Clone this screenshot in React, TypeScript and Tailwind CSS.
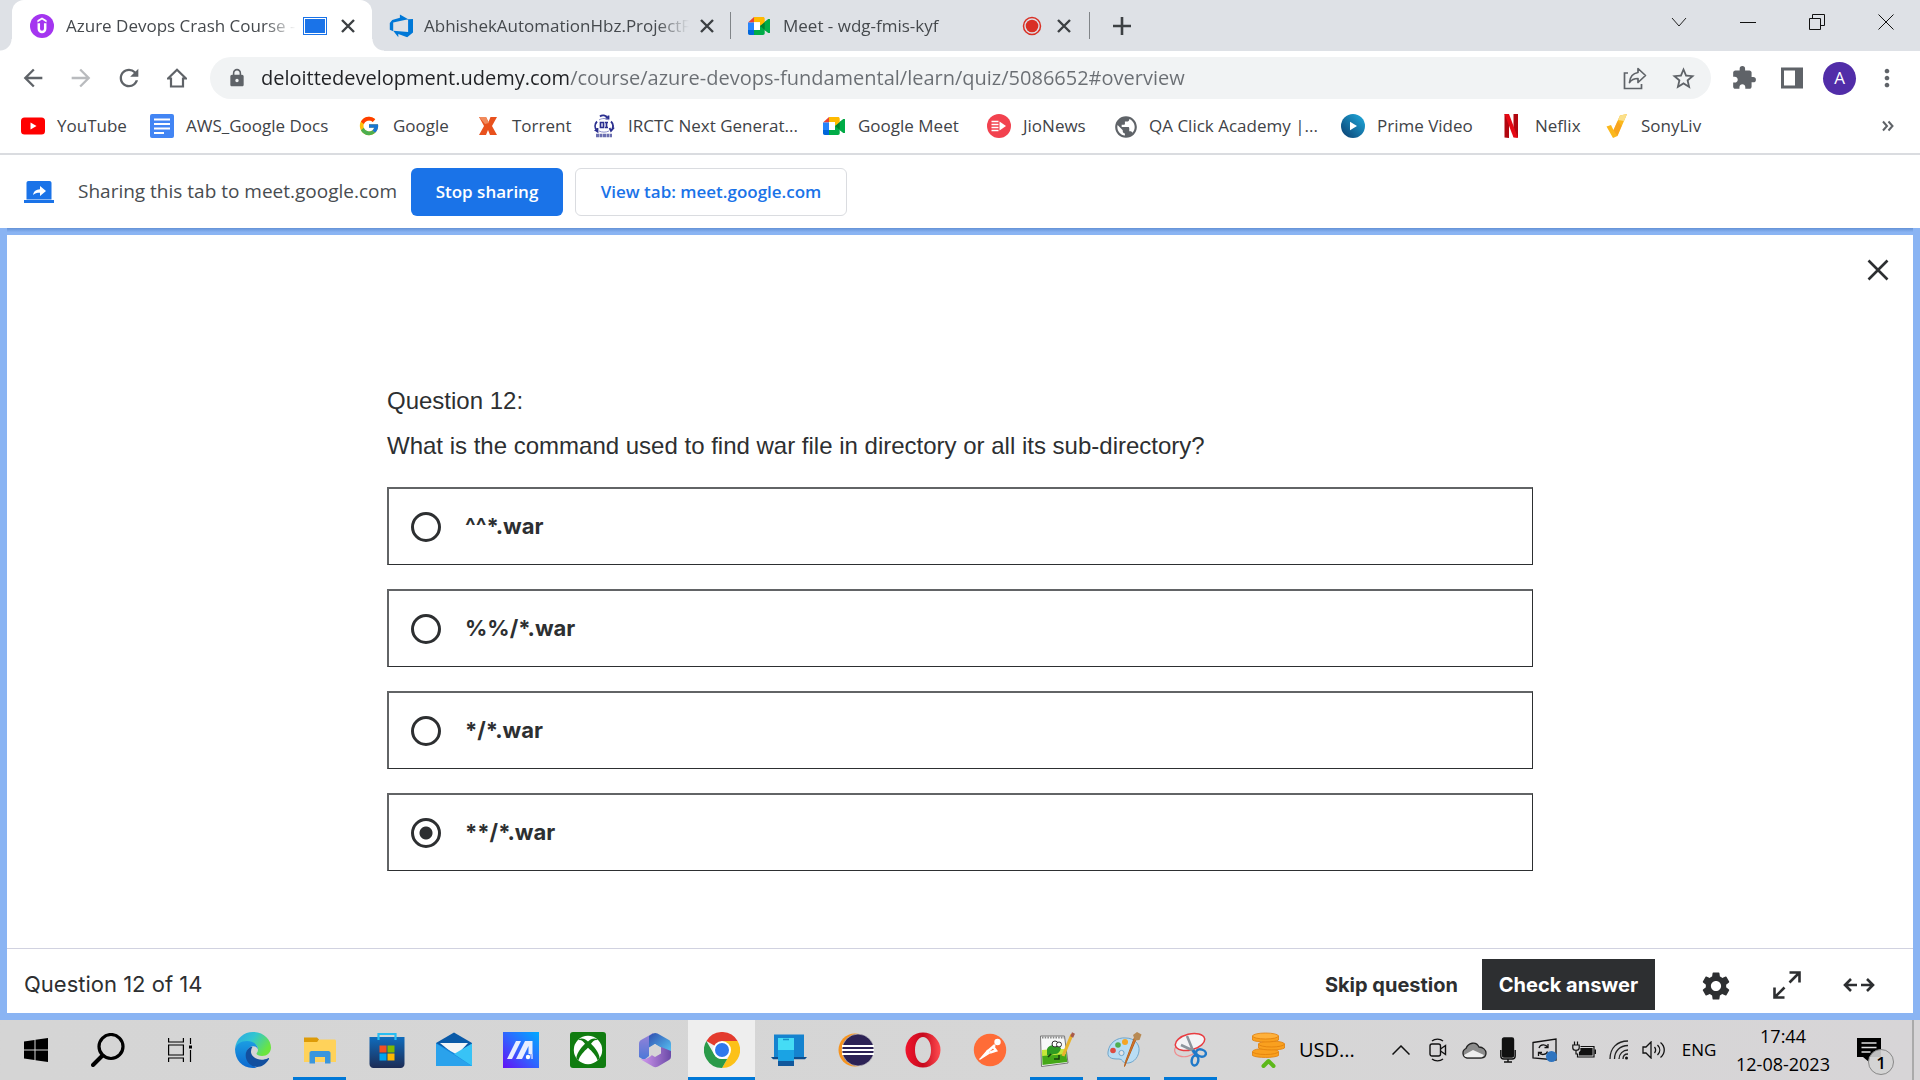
import { useState, type ReactNode } from "react";
import {
  MdArrowBack,
  MdArrowForward,
  MdExtension,
  MdLock,
  MdMoreVert,
  MdPublic,
  MdRefresh,
  MdSettings,
  MdStarBorder,
} from "react-icons/md";
import { FcGoogle } from "react-icons/fc";

/* ---------- favicons ---------- */

function UdemyIcon() {
  return (
    <svg viewBox="0 0 24 24" className="size-6 shrink-0">
      <circle cx="12" cy="12" r="12" fill="#a435f0" />
      <path d="M7.400 8.400 12 5.400l4.600 3V6.300L12 3.400 7.400 6.300z" fill="#fff" />
      <path d="M8.800 9.200v5.600a3.200 3.200 0 0 0 6.400 0V9.200" fill="none" stroke="#fff" strokeWidth="2.500" />
    </svg>
  );
}

function AzureIcon() {
  return (
    <svg viewBox="0 0 24 24" className="size-6 shrink-0">
      <path
        d="M24 4.900v13.600L18.200 23.200l-8.900-3.200v3.200L4.200 16.700l14.900 1.200V5.200zM19.200 5.200 10.900.5v3.300L3.200 6 .8 9v6.800l3.400 1.400V8.600z"
        fill="#0078d7"
      />
    </svg>
  );
}

function MeetIcon() {
  return (
    <svg viewBox="0 0 24 24" className="size-6 shrink-0">
      <path d="M7 3h9c1 0 1.700.7 1.700 1.700V9L13 12V8H7z" fill="#ffba00" />
      <path d="M1 8.500 7 3v5.500z" fill="#ea4335" />
      <path d="M1 8.500h6v8H1z" fill="#2684fc" />
      <path d="M1 16h6v5H2.700C1.700 21 1 20.300 1 19.300z" fill="#0066da" />
      <path d="M7 16h6v-4l4.700-3v10.300c0 1-.7 1.700-1.700 1.700H7z" fill="#00ac47" />
      <path d="M13 12l8.200-6.800c.7-.5 1.800-.1 1.800.8v12c0 .9-1.100 1.300-1.800.8z" fill="#00832d" />
      <path d="M17.700 8.100l3.500-2.900c.7-.5 1.800-.1 1.800.8v12c0 .9-1.100 1.300-1.800.8l-3.500-2.900z" fill="#00ac47" />
      <path d="M7 8.300h6v7.700H7z" fill="#fff" />
    </svg>
  );
}

function YouTubeIcon() {
  return (
    <svg viewBox="0 0 24 24" className="size-6">
      <rect y="3.500" width="24" height="17" rx="3.500" fill="#f00" />
      <path d="M9.500 8.500v7l6-3.500z" fill="#fff" />
    </svg>
  );
}

function DocsIcon() {
  return (
    <svg viewBox="0 0 24 24" className="size-6">
      <rect width="24" height="24" rx="2" fill="#4285f4" />
      <path d="M4 5.500h16M4 10h16M4 14.500h16M4 19h10" stroke="#fff" strokeWidth="2.200" />
    </svg>
  );
}

function TorrentIcon() {
  return (
    <svg viewBox="0 0 24 24" className="size-6">
      <path d="M3 3h7l2.500 5L14.500 3H21l-5 9 5 9h-7l-2-5-2 5H3l5-9z" fill="#e8511d" />
      <path d="M3 3h7l3 6-4 1z" fill="#f08a5c" />
    </svg>
  );
}

function IrctcIcon() {
  return (
    <svg viewBox="0 0 24 24" className="size-6" fill="none" stroke="#2b2f8f">
      <path d="M8 2.500c2-2 6-1.500 7.500 1.500M16.500 1.500v3h-3" strokeWidth="1.800" />
      <path d="M5 7.500c-2.500 2.500-2.500 6.500 0 9.500M2.500 15.500l3 2v-3.500M19 7.500c2.500 2.500 2.500 6 .5 9M22 13.500l-3 3.500-1.500-3" strokeWidth="1.800" />
      <path d="M7 6c3-2 7-2 10 0M7 17c3 1.500 7 1.500 10 0" stroke="#8d90cc" />
      <path d="M8.500 8.500h3v5h-3zM13 8.500h3M14.500 8.500v5M13 13.500h3" strokeWidth="1.700" />
      <path d="M4 21.500h16" strokeWidth="3.500" strokeDasharray="3 .5" stroke="#6b6fb0" />
    </svg>
  );
}

function JioIcon() {
  return (
    <svg viewBox="0 0 24 24" className="size-6">
      <circle cx="12" cy="12" r="12" fill="#f2424f" />
      <path d="M4.500 7.500h7M4.500 10.500h7M4.500 13.500h7M4.500 16.500h7" stroke="#fff" strokeWidth="1.700" />
      <path d="M12.500 7.500v9l6.500-4.500z" fill="#fff" />
    </svg>
  );
}

function PrimeIcon() {
  return (
    <svg viewBox="0 0 24 24" className="size-6">
      <defs>
        <linearGradient id="prime" x1="0" y1="1" x2="1" y2="0">
          <stop offset="0" stopColor="#0b3c6e" />
          <stop offset="1" stopColor="#20aee0" />
        </linearGradient>
      </defs>
      <circle cx="12" cy="12" r="12" fill="url(#prime)" />
      <path d="M9 7.800v8.400l7-4.200z" fill="#fff" />
    </svg>
  );
}

function NetflixIcon() {
  return (
    <svg viewBox="0 0 24 24" className="size-6">
      <path d="M5.500 0H10v24l-4.500-.5zM14.500 0H19v23.500l-4.500-1z" fill="#b1060f" />
      <path d="M5.500 0H10l9 24-4.500-.5z" fill="#e50914" />
    </svg>
  );
}

function SonyIcon() {
  return (
    <svg viewBox="0 0 24 24" className="size-6">
      <path d="M1.500 12.500 6 11l2.500 5L15 1.500 22 0 12.500 22 8 24z" fill="#fbb81c" />
      <path d="M15 1.500 22 0l-3 7-6-1z" fill="#fbe08a" />
      <path d="M8.500 16 12.500 7l4 5-4 10z" fill="#f5901e" opacity=".5" />
    </svg>
  );
}

/* ---------- browser chrome ---------- */

function CloseTab({ label }: { label: string }) {
  return (
    <button aria-label={label} className="grid size-6 shrink-0 place-items-center text-[#3c4043]">
      <svg viewBox="0 0 14 14" className="size-[14px]">
        <path d="M1 1l12 12M13 1L1 13" stroke="currentColor" strokeWidth="2.400" />
      </svg>
    </button>
  );
}

function TabTitle({ children }: { children: ReactNode }) {
  return (
    <span className="min-w-0 flex-1 overflow-hidden whitespace-nowrap text-[17px] text-[#45494d] [mask-image:linear-gradient(to_right,black_calc(100%-32px),transparent)]">
      {children}
    </span>
  );
}

function TabStrip() {
  return (
    <div className="flex h-[51px] items-stretch bg-[#dee1e6] pl-3">
      <div className="relative flex w-[360px] items-center rounded-t-xl bg-white pr-3 pl-[18px] before:absolute before:bottom-0 before:-left-3 before:size-3 before:bg-[radial-gradient(circle_at_0_0,transparent_11px,white_12px)] after:absolute after:-right-3 after:bottom-0 after:size-3 after:bg-[radial-gradient(circle_at_100%_0,transparent_11px,white_12px)]">
        <UdemyIcon />
        <div className="ml-3 flex min-w-0 flex-1">
          <TabTitle>Azure Devops Crash Course -</TabTitle>
        </div>
        <svg viewBox="0 0 24 18" className="mr-[9px] ml-[7px] h-[18px] w-6 shrink-0">
          <rect width="24" height="18" fill="#1a73e8" />
          <rect x="1.500" y="1.500" width="21" height="15" fill="none" stroke="#fff" />
        </svg>
        <CloseTab label="Close Azure Devops Crash Course tab" />
      </div>
      <div className="flex w-[358px] items-center pr-[11px] pl-[17px]">
        <AzureIcon />
        <div className="mr-[6px] ml-[11px] flex min-w-0 flex-1">
          <TabTitle>AbhishekAutomationHbz.ProjectF</TabTitle>
        </div>
        <CloseTab label="Close project tab" />
      </div>
      <div className="my-3 w-px bg-[#808488]" />
      <div className="flex w-[358px] items-center pr-[13px] pl-4">
        <MeetIcon />
        <div className="ml-3 flex min-w-0 flex-1">
          <TabTitle>Meet - wdg-fmis-kyf</TabTitle>
        </div>
        <svg viewBox="0 0 20 20" className="mr-[10px] size-5 shrink-0">
          <circle cx="10" cy="10" r="8.500" fill="none" stroke="#d93025" strokeWidth="1.500" />
          <circle cx="10" cy="10" r="6.300" fill="#d93025" />
        </svg>
        <CloseTab label="Close Meet tab" />
      </div>
      <div className="my-3 w-px bg-[#808488]" />
      <button aria-label="New tab" className="ml-4 grid w-8 place-items-center text-[#3c4043]">
        <svg viewBox="0 0 18 18" className="size-[18px]">
          <path d="M9 0v18M0 9h18" stroke="currentColor" strokeWidth="2.600" />
        </svg>
      </button>
      <div className="ml-auto flex h-11">
        <button aria-label="Search tabs" className="grid w-[69px] place-items-center">
          <svg viewBox="0 0 16 16" className="size-4">
            <path d="M1 4l7 8 7-8" fill="none" stroke="#222" />
          </svg>
        </button>
        <button aria-label="Minimize" className="grid w-[69px] place-items-center">
          <svg viewBox="0 0 16 16" className="size-4">
            <path d="M0 8.500h16" stroke="#111" />
          </svg>
        </button>
        <button aria-label="Restore" className="grid w-[69px] place-items-center">
          <svg viewBox="0 0 16 16" className="size-4" fill="none" stroke="#111">
            <path d="M.5 4.500h11v11H.5zM3.500 4.500v-4h12v11h-4" />
          </svg>
        </button>
        <button aria-label="Close window" className="grid w-[69px] place-items-center">
          <svg viewBox="0 0 16 16" className="size-4">
            <path d="M.5.5l15 15M15.500.5l-15 15" stroke="#111" />
          </svg>
        </button>
      </div>
    </div>
  );
}

function Toolbar() {
  return (
    <div className="flex items-center pt-[6px] pr-[18px] pl-[18px] text-[#5f6368]">
      <div className="flex gap-[18px]">
        <button aria-label="Back" className="grid size-[30px] place-items-center"><MdArrowBack size={28} /></button>
        <button aria-label="Forward" className="grid size-[30px] place-items-center text-[#b9bbbe]"><MdArrowForward size={28} /></button>
        <button aria-label="Reload" className="grid size-[30px] place-items-center"><MdRefresh size={28} /></button>
        <button aria-label="Home" className="grid size-[30px] place-items-center">
          <svg viewBox="0 0 20 20" className="size-5">
            <path d="M1 10.500L10 1.800l9 8.700h-3V18.500H4v-8z" fill="none" stroke="currentColor" strokeWidth="2.200" />
          </svg>
        </button>
      </div>
      <div className="ml-[18px] flex h-[42px] flex-1 items-center rounded-full bg-[#f1f3f4] pr-3 pl-[17px]">
        <MdLock size={20} className="shrink-0" />
        <input
          aria-label="Address"
          defaultValue="deloittedevelopment.udemy.com/course/azure-devops-fundamental/learn/quiz/5086652#overview"
          className="ml-[14px] min-w-0 flex-1 bg-[linear-gradient(to_right,#202124_308px,#6a6e73_308px)] bg-clip-text text-[20px] text-[#5f6368] outline-none [-webkit-text-fill-color:transparent]"
        />
        <button aria-label="Share" className="grid size-8 place-items-center">
          <svg viewBox="0 0 24 24" className="size-6" fill="none" stroke="currentColor" strokeWidth="1.700">
            <path d="M5 7H1.500v15.500h17V18" />
            <path d="M15 2.500l7.500 7-7.500 7v-4c-4 0-6.500 1-8.500 4 .5-5.500 3-9.200 8.500-10z" strokeLinejoin="round" />
          </svg>
        </button>
        <button aria-label="Bookmark this tab" className="ml-4 grid size-8 place-items-center"><MdStarBorder size={27} /></button>
      </div>
      <div className="ml-[18px] flex items-center">
        <button aria-label="Extensions" className="grid size-[30px] place-items-center"><MdExtension size={26} /></button>
        <button aria-label="Side panel" className="ml-[18px] grid size-[30px] place-items-center">
          <svg viewBox="0 0 22 22" className="size-[22px]">
            <path d="M0 .5h22v21H0zM3 3.500v15h11v-15z" fill="currentColor" fillRule="evenodd" />
          </svg>
        </button>
        <button aria-label="Profile" className="ml-4 grid size-[33px] place-items-center rounded-full bg-[#512da8] text-[17px] text-white">A</button>
        <button aria-label="Menu" className="ml-4 grid size-[30px] place-items-center"><MdMoreVert size={28} /></button>
      </div>
    </div>
  );
}

const bookmarks: { label: string; icon: ReactNode; width: string }[] = [
  { label: "YouTube", icon: <YouTubeIcon />, width: "w-[129px]" },
  { label: "AWS_Google Docs", icon: <DocsIcon />, width: "w-[207px]" },
  { label: "Google", icon: <FcGoogle size={22} />, width: "w-[119px]" },
  { label: "Torrent", icon: <TorrentIcon />, width: "w-[116px]" },
  { label: "IRCTC Next Generat...", icon: <IrctcIcon />, width: "w-[230px]" },
  { label: "Google Meet", icon: <MeetIcon />, width: "w-[165px]" },
  { label: "JioNews", icon: <JioIcon />, width: "w-[126px]" },
  { label: "QA Click Academy |...", icon: <MdPublic size={26} color="#5f6368" />, width: "w-[228px]" },
  { label: "Prime Video", icon: <PrimeIcon />, width: "w-[158px]" },
  { label: "Neflix", icon: <NetflixIcon />, width: "w-[106px]" },
  { label: "SonyLiv", icon: <SonyIcon />, width: "w-[110px]" },
];

function Bookmarks() {
  return (
    <nav aria-label="Bookmarks" className="flex h-14 items-center border-b-2 border-[#dadce0] pr-[26px] pl-[21px]">
      {bookmarks.map((b) => (
        <a key={b.label} href="#" className={`flex shrink-0 items-center gap-3 whitespace-nowrap text-[17px] text-[#3f4347] ${b.width}`}>
          <span className="grid size-6 shrink-0 place-items-center">{b.icon}</span>
          {b.label}
        </a>
      ))}
      <button aria-label="More bookmarks" className="ml-auto">
        <svg viewBox="0 0 12 12" className="size-3" fill="none" stroke="#5f6368" strokeWidth="2">
          <path d="M1 1.500L5 6l-4 4.500M6.500 1.500l4 4.500-4 4.500" />
        </svg>
      </button>
    </nav>
  );
}

function ShareBar() {
  return (
    <div className="flex h-[73px] items-center pl-6">
      <svg viewBox="0 0 30 22" className="h-[22px] w-[30px]">
        <path d="M4.500 0h21c1.200 0 2 .8 2 2v16.500h-25V2c0-1.200.8-2 2-2zM0 19h30v3H0z" fill="#1a73e8" />
        <path d="M9 14c.8-4 3-5.500 7-5.800V5l6 5-6 5v-3.200c-3.200 0-5.300.5-7 2.200z" fill="#fff" />
      </svg>
      <span className="ml-6 w-[333px] text-[19px] whitespace-nowrap text-[#484c50]">Sharing this tab to meet.google.com</span>
      <button className="h-12 w-[152px] rounded-md bg-[#1a73e8] text-[17px] font-semibold text-white">Stop sharing</button>
      <button className="ml-3 h-12 w-[272px] rounded-md border border-[#dadce0] text-[17px] font-semibold text-[#1a73e8]">
        View tab: meet.google.com
      </button>
    </div>
  );
}

/* ---------- quiz ---------- */

const options = ["^^*.war", "%%/*.war", "*/*.war", "**/*.war"];

function Quiz() {
  const [picked, setPicked] = useState(3);
  return (
    <main className="flex flex-1 flex-col border-7 border-t-0 border-[#8ab4f3] font-[Inter,sans-serif] text-[#2d2f31]">
      <div className="h-[7px] bg-linear-to-b from-[#6492d6] to-[#8ab4f3] to-60%" />
      <div className="flex justify-end px-[19px] pt-[19px]">
        <button aria-label="Close quiz" className="grid size-8 place-items-center">
          <svg viewBox="0 0 22 22" className="size-[22px]">
            <path d="M1.500 1.500l19 19M20.500 1.500l-19 19" stroke="currentColor" strokeWidth="2.600" />
          </svg>
        </button>
      </div>
      <form className="mx-auto mt-[97px] mb-auto w-full max-w-[1146px]">
        <div className="font-['Liberation_Sans',sans-serif] text-[24px] leading-9">
          <p>Question 12:</p>
          <p className="mt-[9px]">What is the command used to find war file in directory or all its sub-directory?</p>
        </div>
        <div className="mt-[23px] flex flex-col gap-6">
          {options.map((o, i) => (
            <label
              key={o}
              className="flex h-[78px] items-center gap-6 border-2 border-r border-b border-[#626466] border-r-[#2d2f31] border-b-[#2d2f31] pl-[22px] text-[22px] font-bold"
            >
              <input
                type="radio"
                name="answer"
                checked={picked === i}
                onChange={() => setPicked(i)}
                className="size-[30px] appearance-none rounded-full border-[3px] border-[#2d2f31] checked:bg-[radial-gradient(circle,#2d2f31_6px,transparent_7px)]"
              />
              {o}
            </label>
          ))}
        </div>
      </form>
      <footer className="flex h-[65px] items-center border-t border-[#d1d2e0] pt-[7px] pr-[38px] pl-[17px]">
        <span className="text-[22px]">Question 12 of 14</span>
        <button className="ml-auto px-6 text-[20px] font-bold">Skip question</button>
        <button className="h-[51px] w-[173px] bg-[#2d2f31] text-[20px] font-bold text-white">Check answer</button>
        <button aria-label="Settings" className="ml-11 grid size-8 place-items-center"><MdSettings size={34} className="shrink-0" /></button>
        <button aria-label="Expand" className="ml-10 grid size-8 place-items-center">
          <svg viewBox="0 0 28 28" className="size-7" fill="none" stroke="currentColor" strokeWidth="2.600">
            <path d="M16.500 1.500h10v10M26 2L16.500 11.500M11.500 26.500h-10v-10M2 26l9.500-9.500" />
          </svg>
        </button>
        <button aria-label="Wide view" className="ml-10 grid size-8 place-items-center">
          <svg viewBox="0 0 32 14" className="h-[14px] w-8" fill="none" stroke="currentColor" strokeWidth="2.600">
            <path d="M8 1L2 7l6 6M2 7h12M24 1l6 6-6 6M30 7H18" />
          </svg>
        </button>
      </footer>
    </main>
  );
}

/* ---------- taskbar ---------- */

function EdgeIcon() {
  return (
    <svg viewBox="0 0 36 36" className="size-9">
      <defs>
        <linearGradient id="edgeTop" x1="0" y1="0" x2="1" y2=".5">
          <stop offset="0" stopColor="#2aa6e6" />
          <stop offset=".5" stopColor="#32c6d0" />
          <stop offset="1" stopColor="#6be53f" />
        </linearGradient>
        <linearGradient id="edgeLeft" x1="0" y1="0" x2="0" y2="1">
          <stop offset="0" stopColor="#1b9de2" />
          <stop offset="1" stopColor="#0c68cf" />
        </linearGradient>
      </defs>
      <path d="M0 17C1 6 9 0 18 0c11 0 18 8 18 15.500 0 5-4 8.500-9 8.500-3 0-5.500-1-5.500-2.200 0-1 1.500-1.500 1.500-4.300C23 13 18 10 12 10 6 10 1 13 0 17z" fill="url(#edgeTop)" />
      <path d="M0 17c1-5 6-8 12-8 6.500 0 11 4 11 8.500-1-3-4-4-6.500-3-4 1.500-6.500 6.500-4 12 2 4.500 6.500 8 9.500 9C9 38 0 29 0 17z" fill="url(#edgeLeft)" />
      <path d="M14 16c-5 4-4 12 .5 16 5 4.500 14 4.500 19.500-5 .3-.8-.3-1.200-1-.8-5 2.500-12 2-15.500-2.500-2-2.500-2-6 0-9-1.300 0-2.500.4-3.500 1.300z" fill="#124f9f" />
    </svg>
  );
}

function ExplorerIcon() {
  return (
    <svg viewBox="0 0 34 34" className="size-[34px]">
      <path d="M1 4.500h13l2 2-2 4H1z" fill="#dd9b08" />
      <path d="M1 9h13l2.500-2.500H31.500c.8 0 1.500.7 1.500 1.500v21H1z" fill="#ffd25a" />
      <path d="M6.500 30.500V20c0-1 .8-2 2-2h17c1.200 0 2 1 2 2v10.500h-5.500V24h-10v6.500z" fill="#3a96dd" />
    </svg>
  );
}

function StoreIcon() {
  return (
    <svg viewBox="0 0 36 36" className="size-9">
      <defs>
        <linearGradient id="store" x1="0" y1="0" x2="0" y2="1">
          <stop offset="0" stopColor="#0f6cbd" />
          <stop offset="1" stopColor="#1d2c55" />
        </linearGradient>
      </defs>
      <path d="M.5 5h35v27c0 2-1.500 4-4 4h-27c-2.500 0-4-2-4-4z" fill="url(#store)" />
      <path d="M9.500 8V2h17v6" fill="none" stroke="#28bdf2" strokeWidth="2.200" />
      <path d="M10.500 13.500h7v7h-7z" fill="#f25022" />
      <path d="M18.500 13.500h7v7h-7z" fill="#7fba00" />
      <path d="M10.500 21.500h7v7h-7z" fill="#00a4ef" />
      <path d="M18.500 21.500h7v7h-7z" fill="#ffb900" />
    </svg>
  );
}

function MailIcon() {
  return (
    <svg viewBox="0 0 36 36" className="size-9">
      <path d="M0 11L18 .5 36 11v8H0z" fill="#0a5aa8" />
      <path d="M4 11h28L20 24z" fill="#f3f5f7" />
      <path d="M0 11l36 20v3H0z" fill="#1487dc" />
      <path d="M0 11.500L36 34H0z" fill="#2aa2ec" />
      <path d="M36 11.500v22.500L18 22z" fill="#38c3f6" />
    </svg>
  );
}

function MyAsusIcon() {
  return (
    <svg viewBox="0 0 36 36" className="size-9">
      <defs>
        <linearGradient id="asus" x1="0" y1="1" x2="1" y2="0">
          <stop offset="0" stopColor="#6410f5" />
          <stop offset=".5" stopColor="#3066ff" />
          <stop offset="1" stopColor="#00aaff" />
        </linearGradient>
      </defs>
      <path d="M0 0h36v36H0z" fill="url(#asus)" />
      <path d="M4 27L13 9h5L9 27zM13 27l9-18h7.500v13h-4v-8L19 27z" fill="#e8eeff" />
      <circle cx="25" cy="25" r="2.200" fill="#fff" />
      <path d="M27 22h3v5h-2z" fill="#a9bcff" />
    </svg>
  );
}

function XboxIcon() {
  return (
    <svg viewBox="0 0 36 36" className="size-9">
      <rect width="36" height="36" rx="3" fill="#107c10" />
      <circle cx="18" cy="18" r="14.200" fill="#fff" />
      <path d="M8.500 7.500C12 5.500 15 7 18 9.500 21 7 24 5.500 27.500 7.500L27 8.300C25 7.500 23 9.500 21 11.800c4.500 4.500 9 10.500 8.500 15l-2 1.500c-1-4-5.500-9-9.500-12.500C14 19.300 9.500 24.300 8.500 28.300l-2-1.500c-.5-4.500 4-10.500 8.500-15C13 9.500 11 7.500 9 8.300z" fill="#107c10" />
    </svg>
  );
}

function M365Icon() {
  return (
    <svg viewBox="0 0 36 36" className="size-9">
      <defs>
        <linearGradient id="m1" x1="0" y1="0" x2="0" y2="1"><stop offset="0" stopColor="#9a82d8" /><stop offset="1" stopColor="#4a78d8" /></linearGradient>
        <linearGradient id="m2" x1="0" y1="0" x2="1" y2="1"><stop offset="0" stopColor="#2f4fb0" /><stop offset="1" stopColor="#58c6f4" /></linearGradient>
        <linearGradient id="m3" x1="0" y1="0" x2="1" y2="0"><stop offset="0" stopColor="#d59cf0" /><stop offset="1" stopColor="#6b4aa8" /></linearGradient>
      </defs>
      <path d="M12 3.500L16 1v12l-4 3v8l-5 4-5-3V12c0-2 .5-3 2-4z" fill="url(#m1)" />
      <path d="M12 4l4-2.500c1.500-.8 3-.8 4.500 0L32 8c1.500 1 2 2 2 4v9l-10-5-6-4-6 4z" fill="url(#m2)" />
      <path d="M34 19v5c0 2-.5 3-2 4l-11 6.500c-2 1-3.500 1-5 0L3 27c5 1 9-1 12-4h6l3-3v-5z" fill="url(#m3)" />
      <path d="M18 12l6 3.500v6L18 25l-6-3.500v-6z" fill="#d6d6d6" />
    </svg>
  );
}

function ChromeIcon() {
  return (
    <svg viewBox="0 0 36 36" className="size-9">
      <path d="M18 18L2.400 9A18 18 0 0 1 33.600 9z" fill="#e33b2e" />
      <path d="M18 9h15.600A18 18 0 0 1 18 36l7.800-13.500z" fill="#fcc118" />
      <path d="M2.400 9l7.800 13.500A9 9 0 0 0 18 27h5.200L18 36A18 18 0 0 1 2.400 9z" fill="#2a9a49" />
      <circle cx="18" cy="18" r="9" fill="#fff" />
      <circle cx="18" cy="18" r="7" fill="#2f78ec" />
    </svg>
  );
}

function PhoneLinkIcon() {
  return (
    <svg viewBox="0 0 36 36" className="size-9">
      <path d="M3 2.500h30v23H3z" fill="#1583cf" />
      <path d="M0 25h36l-2 2.200H2z" fill="#0d4d8c" />
      <path d="M7 6h16v28H7z" fill="#1aa3e4" />
      <path d="M7 6h16v12H7z" fill="#45dcf5" />
      <path d="M7 29h16v5H7z" fill="#11589c" />
      <path d="M12 7.500h6" stroke="#1593c9" strokeWidth="1.500" />
    </svg>
  );
}

function EclipseIcon() {
  return (
    <svg viewBox="0 0 36 36" className="size-9">
      <circle cx="17" cy="18" r="16.500" fill="#f7941e" />
      <circle cx="20" cy="18" r="16" fill="#2c2255" stroke="#d6d6d6" strokeWidth=".6" />
      <path d="M4 14h32M4 18h32M4 22h32" stroke="#fff" strokeWidth="2.200" />
    </svg>
  );
}

function OperaIcon() {
  return (
    <svg viewBox="0 0 36 36" className="size-9">
      <defs>
        <linearGradient id="opera" x1="0" y1="0" x2="1" y2="0">
          <stop offset="0" stopColor="#f0142c" />
          <stop offset=".5" stopColor="#c60a1e" />
          <stop offset="1" stopColor="#ff4c50" />
        </linearGradient>
      </defs>
      <path d="M18 .5a17.500 17.500 0 1 0 0 35 17.500 17.500 0 0 0 0-35zM18 5c4.500 0 8 5.500 8 13s-3.500 13-8 13-8-5.500-8-13 3.500-13 8-13z" fill="url(#opera)" fillRule="evenodd" />
    </svg>
  );
}

function PostmanIcon() {
  return (
    <svg viewBox="0 0 36 36" className="size-9">
      <circle cx="18" cy="18" r="16.200" fill="#ff6c37" />
      <circle cx="25.500" cy="10" r="3.200" fill="#fff" />
      <path d="M23 13l-8 7M21 14.500l3 4-6 2" stroke="#fff" strokeWidth="2.500" fill="none" />
      <path d="M15.500 18.500L9 26l-1.500 1.500 10-6.500z" fill="#fff" stroke="#fff" strokeWidth="1.200" />
    </svg>
  );
}

function NotepadIcon() {
  return (
    <svg viewBox="0 0 36 36" className="size-9">
      <path d="M1.500 4h24l3.500 27-26.500 3.500z" fill="#f7f8f8" stroke="#777" />
      <path d="M3 5.500h23" stroke="#888" strokeWidth="2" strokeDasharray="1.500 1.200" />
      <path d="M3 20c8-3 16-2 24-3l1.200 13L3.500 33z" fill="#45a818" />
      <path d="M3 18c8-1 15-1 23.500-1l.5 5-23.800 2z" fill="#c7e83a" />
      <path d="M8 17c2-5 11-5 14-1-1 4-3 6-6 6s-5 3-8 1z" fill="#2f9b22" />
      <circle cx="16" cy="12" r="3" fill="#fff" stroke="#333" />
      <circle cx="20" cy="12.500" r="2.500" fill="#fff" stroke="#333" />
      <path d="M15 27h5v-4M12 22l-3 3" stroke="#183e10" strokeWidth="1.500" fill="none" />
      <path d="M33 2.500L24 24" stroke="#e9b32c" strokeWidth="3.200" />
      <path d="M34.500 1l-1.800 4" stroke="#a85a4a" strokeWidth="3.200" />
    </svg>
  );
}

function PaintIcon() {
  return (
    <svg viewBox="0 0 36 36" className="size-9">
      <path d="M2 20C3 11 11 5 20 6c8 0 14 6 13 13-1 8-7 13-14 12-3-1-2-4-6-4-5 0-12 0-11-7z" fill="#b9ddf4" stroke="#6fa6cc" />
      <circle cx="7" cy="18.500" r="2.800" fill="#dd4b42" />
      <circle cx="12" cy="13" r="2.800" fill="#4fae50" />
      <circle cx="19" cy="10" r="3" fill="#f4a526" />
      <circle cx="15.500" cy="21" r="2.600" fill="#e4e4e6" stroke="#6fa6cc" />
      <path d="M31 5L20 31l-1.500 3.500 1-5L29 4z" fill="#d8762c" stroke="#b6601c" />
      <path d="M27 3l4-3 4.500 2.500L33.500 8 29 8.500z" fill="#b88a54" />
    </svg>
  );
}

function SnipIcon() {
  return (
    <svg viewBox="0 0 36 36" className="size-9" fill="none">
      <ellipse cx="13" cy="17" rx="11.500" ry="7.500" transform="rotate(-12 13 17)" stroke="#ef8d8f" strokeWidth="1.200" />
      <ellipse cx="17" cy="10" rx="15" ry="8" transform="rotate(-14 17 10)" fill="#f3f3f5" stroke="#e83c40" strokeWidth="1.500" />
      <path d="M14 4l7 17M8 13l13 6" stroke="#8b949c" strokeWidth="2.500" />
      <ellipse cx="28" cy="21" rx="5" ry="3.500" transform="rotate(15 28 21)" stroke="#1f79c9" strokeWidth="2.500" />
      <ellipse cx="22" cy="28.500" rx="3.300" ry="5" transform="rotate(10 22 28.500)" stroke="#1f79c9" strokeWidth="2.500" />
      <path d="M20 18l3 5" stroke="#1f79c9" strokeWidth="3" />
    </svg>
  );
}

function CoinsIcon() {
  return (
    <svg viewBox="0 0 36 36" className="size-9">
      <g stroke="#e07f0c" strokeWidth=".8" fill="#f9a01f">
        <path d="M1.500 20v3.500c3 2.600 23 2.600 26 0V20z" />
        <ellipse cx="14.500" cy="19.500" rx="13" ry="3" />
        <path d="M7.500 12v4c3 2.600 23 2.600 26 0v-4z" />
        <ellipse cx="20.500" cy="12" rx="13" ry="3" />
        <path d="M1.500 4v4c3 2.600 23 2.600 26 0V4z" />
        <ellipse cx="14.500" cy="4" rx="13" ry="3" fill="#ffb13b" />
      </g>
      <path d="M12.500 34l5-5 5 5" fill="none" stroke="#5cb81a" strokeWidth="4" strokeLinecap="round" strokeLinejoin="round" />
    </svg>
  );
}

type App = { name: string; icon: ReactNode; state?: "open" | "active" };

const apps: App[] = [
  { name: "Microsoft Edge", icon: <EdgeIcon /> },
  { name: "File Explorer", icon: <ExplorerIcon />, state: "open" },
  { name: "Microsoft Store", icon: <StoreIcon /> },
  { name: "Mail", icon: <MailIcon /> },
  { name: "MyASUS", icon: <MyAsusIcon /> },
  { name: "Xbox", icon: <XboxIcon /> },
  { name: "Microsoft 365", icon: <M365Icon /> },
  { name: "Google Chrome", icon: <ChromeIcon />, state: "active" },
  { name: "Phone Link", icon: <PhoneLinkIcon /> },
  { name: "Eclipse", icon: <EclipseIcon /> },
  { name: "Opera", icon: <OperaIcon /> },
  { name: "Postman", icon: <PostmanIcon /> },
  { name: "Notepad++", icon: <NotepadIcon />, state: "open" },
  { name: "Paint", icon: <PaintIcon />, state: "open" },
  { name: "Snipping Tool", icon: <SnipIcon />, state: "open" },
];

function AppButton({ app }: { app: App }) {
  const active = app.state === "active";
  return (
    <button aria-label={app.name} className={`flex w-[67px] flex-col items-center ${active ? "bg-[#eeeeee]" : ""}`}>
      <span className="grid flex-1 place-items-center pt-[3px]">{app.icon}</span>
      <span className={`h-[3px] ${active ? "w-full" : "w-[53px]"} ${app.state ? "bg-[#0078d7]" : ""}`} />
    </button>
  );
}

function Tray() {
  return (
    <div className="ml-auto flex items-center text-black">
      <button aria-label="Show hidden icons" className="grid h-full w-[38px] place-items-center">
        <svg viewBox="0 0 18 10" className="h-[10px] w-[18px]" fill="none" stroke="#111" strokeWidth="1.500"><path d="M.5 9.500L9 1l8.500 8.500" /></svg>
      </button>
      <button aria-label="Meet now" className="grid h-full w-9 place-items-center">
        <svg viewBox="0 0 18 24" className="h-6 w-[18px]" fill="none" stroke="#111" strokeWidth="1.400">
          <rect x="1" y="6" width="10.500" height="12" rx="2" /><path d="M11.500 11l5-3.500v9l-5-3.500M3 3c3-2.500 8-2.500 11 0M3 21c3 2.500 8 2.500 11 0" />
        </svg>
      </button>
      <button aria-label="OneDrive" className="grid h-full w-9 place-items-center">
        <svg viewBox="0 0 26 18" className="h-[18px] w-[26px]">
          <path d="M6 17a5 5 0 0 1-1-9.500C7 2 15-.5 18 6c4 0 7 3 7 6s-2 5-5 5z" fill="#8c8c8c" stroke="#222" strokeWidth="1.300" />
          <path d="M3 14l9-5 11 5c-1 1.500-2 2.300-3 2.300H6c-1.500 0-2.500-1-3-2.300z" fill="#eee" />
        </svg>
      </button>
      <button aria-label="Microphone" className="grid h-full w-8 place-items-center">
        <svg viewBox="0 0 16 26" className="h-[26px] w-4" fill="none" stroke="#111" strokeWidth="1.400">
          <rect x="2.500" y="1" width="11" height="19" rx="1.500" fill="#111" /><path d="M.8 13v6c0 2 1 3 3 3h8.400c2 0 3-1 3-3v-6M8 22v3M4 25h8" />
        </svg>
      </button>
      <button aria-label="Updates" className="grid h-full w-[42px] place-items-center">
        <svg viewBox="0 0 26 24" className="h-6 w-[26px]" fill="none" stroke="#111" strokeWidth="1.300">
          <path d="M1 4.500L24 1v21L1 20z" />
          <path d="M7 10c1-4 7-4 8.500-1M16 6v3.500h-3.500M15.500 13.500c-1 3.500-6.500 4-8.500 1M6.500 18v-3.500H10" />
          <circle cx="19.500" cy="18.500" r="5.500" fill="#2e74bf" stroke="none" />
        </svg>
      </button>
      <button aria-label="Battery" className="grid h-full w-9 place-items-center">
        <svg viewBox="0 0 24 18" className="h-[18px] w-6" fill="none" stroke="#111" strokeWidth="1.200">
          <path d="M8.500 5.500H22V16H5.500v-3M23.400 8.500v4.500" />
          <path d="M9 7.500h11v6.500H7.500v-2.500L9 10z" fill="#111" />
          <path d="M2.500.5v3.500M5.500.5v3.500M.8 4h6.400v3c0 3-6.400 3-6.400 0zM4 9.500V13h2" />
        </svg>
      </button>
      <button aria-label="Network" className="grid h-full w-[34px] place-items-center">
        <svg viewBox="0 0 20 20" className="size-5" fill="none" stroke="#222" strokeWidth="1.300">
          <path d="M1 19C1 8 8 1 19 1M5.500 19C5.500 11 11 5.500 19 5.500M10 19c0-5 4-9 9-9M14 19c0-3 2-5 5-5" /><circle cx="17.500" cy="18" r="1.500" fill="#111" stroke="none" />
        </svg>
      </button>
      <button aria-label="Volume" className="grid h-full w-9 place-items-center">
        <svg viewBox="0 0 24 18" className="h-[18px] w-6" fill="none" stroke="#111" strokeWidth="1.300">
          <path d="M1 6h3l5-5v16l-5-5H1zM12.500 6c1.500 2 1.500 4 0 6M15.500 4c3 3 3 7 0 10M18.500 1.500c5 4 5 11 0 15" />
        </svg>
      </button>
      <button className="h-full w-[54px] text-[17px]">ENG</button>
      <button className="flex h-full w-[114px] flex-col items-center justify-center text-[18px] leading-7">
        <span>17:44</span>
        <span>12-08-2023</span>
      </button>
      <button aria-label="Notifications" className="relative grid h-full w-[72px] place-items-center pr-[14px]">
        <svg viewBox="0 0 24 24" className="size-6">
          <path d="M0 0h24v19H12v5l-6-5H0z" fill="#000" />
          <path d="M4.500 5h15M4.500 9.500h15M4.500 14h9" stroke="#ddd" strokeWidth="1.300" />
        </svg>
        <span className="absolute top-[29px] right-[18px] grid size-[26px] place-items-center rounded-full border border-[#888] bg-[#d4d4d4]/90 text-[17px] font-semibold">1</span>
      </button>
      <div className="h-full w-2 border-l-2 border-[#aaa]" />
    </div>
  );
}

function Taskbar() {
  return (
    <div className="flex h-[60px] items-stretch bg-linear-to-r from-[#d5d5d5] via-[#d6d6d6] via-60% to-[#d7d5d7]">
      <button aria-label="Start" className="grid w-[72px] place-items-center">
        <svg viewBox="0 0 24 24" className="size-6"><path d="M0 3.500l10.500-1.500v9.500H0zM11.500 1.800L24 0v11.500H11.500zM0 12.500h10.500V22L0 20.500zM11.500 12.500H24V24l-12.500-1.800z" /></svg>
      </button>
      <button aria-label="Search" className="grid w-[72px] place-items-center">
        <svg viewBox="0 0 34 34" className="size-[34px]" fill="none" stroke="#000"><circle cx="20" cy="13.500" r="12" strokeWidth="3.200" /><path d="M11.500 22.500L2 32" strokeWidth="4" strokeLinecap="round" /></svg>
      </button>
      <button aria-label="Task view" className="mr-[3px] grid w-[72px] place-items-center">
        <svg viewBox="0 0 24 24" className="size-6" fill="none" stroke="#000" strokeWidth="1.200"><path d="M.6 0v4h14.800V0M.6 24v-4h14.800v4M.6 7h14.800v10H.6zM22.500 0v6M22.500 12v12" /><path d="M21 7.500h3v3h-3z" fill="#000" stroke="none" /></svg>
      </button>
      {apps.map((a) => (
        <AppButton key={a.name} app={a} />
      ))}
      <button className="ml-[27px] flex items-center gap-3 text-[20px] text-black">
        <CoinsIcon />
        USD...
      </button>
      <Tray />
    </div>
  );
}

export default function App() {
  return (
    <div className="flex min-h-screen flex-col bg-white font-['Open_Sans','Noto_Sans',sans-serif]">
      <header>
        <TabStrip />
        <Toolbar />
        <Bookmarks />
        <ShareBar />
      </header>
      <Quiz />
      <Taskbar />
    </div>
  );
}
